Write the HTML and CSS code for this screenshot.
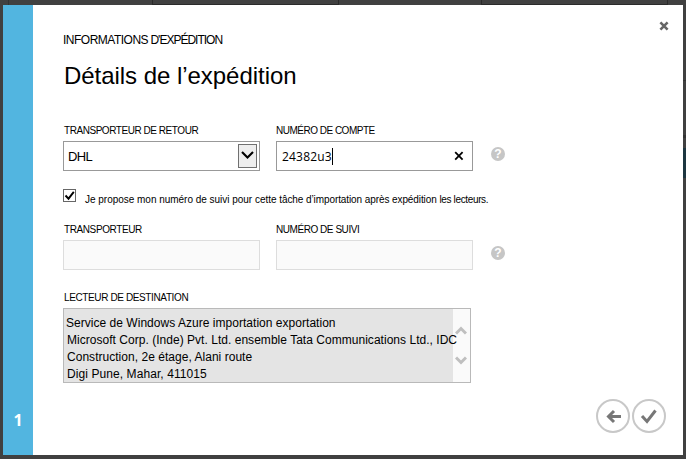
FILE: index.html
```html
<!DOCTYPE html>
<html lang="fr">
<head>
<meta charset="utf-8">
<title>Détails de l’expédition</title>
<link rel="stylesheet" href="styles.css">
</head>
<body>
<div class="backdrop-tab tab-start"></div>
<div class="backdrop-tab tab-left"></div>
<div class="backdrop-tab tab-right"></div>
<div class="backdrop-rule"></div>
<div class="backdrop-selection"></div>
<main class="dialog">
  <aside class="steps"><span>1</span></aside>
  <section class="content">
    <button class="close" aria-label="Fermer"><svg width="10" height="10" viewBox="0 0 10 10"><path d="M1.4 1.4l7.2 7.2M8.6 1.4L1.4 8.6"/></svg></button>
    <p class="eyebrow"><span>INFORMATIONS</span><span class="eyebrow-end"> D'EXPÉDITION</span></p>
    <h1>Détails de l’expédition</h1>
    <div class="row">
      <div class="field">
        <label class="label-carrier">TRANSPORTEUR DE RETOUR</label>
        <div class="box select"><span class="value-carrier">DHL</span><span class="drop"><svg width="17" height="22" viewBox="0 0 17 22"><path d="M3 7l5.5 5.5L14 7"/></svg></span></div>
      </div>
      <div class="field">
        <label class="label-account">NUMÉRO DE COMPTE</label>
        <div class="box input"><span class="value-account">24382u3</span><span class="caret"></span><svg class="clear" width="10" height="10" viewBox="0 0 10 10"><path d="M1.2 1.2l7.4 7.4M8.6 1.2L1.2 8.6"/></svg></div>
      </div>
      <span class="help">?</span>
    </div>
    <div class="check-row">
      <span class="checkbox"><svg width="11" height="11" viewBox="0 0 11 11"><path d="M1.5 5.5l3 3.2L9.8 1.8"/></svg></span>
      <p class="check-text"><span class="check-start">Je propose mon numéro de suivi pour cette </span><span class="check-mid">tâche d’importation après expédition </span><span class="check-end">les lecteurs.</span></p>
    </div>
    <div class="row">
      <div class="field">
        <label class="label-track-carrier">TRANSPORTEUR</label>
        <div class="box disabled"></div>
      </div>
      <div class="field">
        <label class="label-track">NUMÉRO DE SUIVI</label>
        <div class="box disabled"></div>
      </div>
      <span class="help">?</span>
    </div>
    <div class="destination">
      <label class="label-dest">LECTEUR DE DESTINATION</label>
      <div class="address">
        <div class="lines">
          <p class="line1">Service de Windows Azure importation exportation</p>
          <p class="line2">Microsoft Corp. (Inde) Pvt. Ltd. ensemble Tata Communications Ltd., IDC</p>
          <p class="line3">Construction, 2e étage, Alani route</p>
          <p class="line4">Digi Pune, Mahar, 411015</p>
        </div>
        <div class="scroll">
          <svg width="12" height="9" viewBox="0 0 12 9"><path d="M1 7.5l5-5 5 5"/></svg>
          <svg width="12" height="9" viewBox="0 0 12 9"><path d="M1 1.5l5 5 5-5"/></svg>
        </div>
      </div>
    </div>
    <nav class="actions">
      <button aria-label="Précédent"><svg width="34" height="34" viewBox="0 0 34 34"><circle cx="17" cy="17" r="16"/><path d="M25 17.5H13M18 12l-5.5 5.5L18 23"/></svg></button>
      <button aria-label="Terminer"><svg width="34" height="34" viewBox="0 0 34 34"><circle cx="17" cy="17" r="16"/><path d="M10 17l5 5.5 8.5-11"/></svg></button>
    </nav>
  </section>
</main>
</body>
</html>
```
FILE: styles.css
```css
* { box-sizing: border-box; }
body {
  margin: 0;
  height: 459px;
  padding: 5px 3px 4px;
  background: #404040;
  color: #000;
  font-family: "Liberation Sans", Arial, sans-serif;
  overflow: hidden;
}
p, h1 { margin: 0; font-weight: 400; white-space: pre; }
label { white-space: pre; }
button { padding: 0; border: 0; background: none; display: block; }
svg { display: block; fill: none; }
.backdrop-tab { position: absolute; top: 0; height: 5px; border: 1px solid #2a2a2a; border-top: 0; }
.tab-start { left: 8px; width: 145px; border-color: #333; border-bottom: 0; }
.tab-left { left: 152px; width: 187px; }
.tab-right { left: 481px; width: 187px; }
.backdrop-rule { position: absolute; top: 80px; right: 0; width: 3px; height: 58px; border: solid #333; border-width: 1px 0 3px; }
.backdrop-selection { position: absolute; top: 148px; right: 0; width: 3px; height: 30px; background: #1d3640; }
.dialog { position: relative; display: flex; width: 680px; height: 450px; background: #fff; }
.steps {
  width: 30px;
  display: flex;
  align-items: flex-end;
  justify-content: center;
  padding-bottom: 26px;
  background: #52b5e0;
  color: #fff;
  font: bold 16px/18px "Open Sans", sans-serif;
}
.content { position: relative; flex: 1; padding: 27px 0 0 30px; }
.close { position: absolute; top: 16px; right: 14px; }
.close path { stroke: #666; stroke-width: 2.6; }
.eyebrow { height: 16px; font-size: 12px; line-height: 16px; letter-spacing: -.5px; }
.eyebrow-end { letter-spacing: -1px; }
h1 { margin-top: 13px; padding-left: 1px; height: 30px; font-size: 24px; line-height: 30px; letter-spacing: -.04px; }
.row { display: flex; gap: 16px; margin-top: 34px; }
.field { width: 197px; }
.field label, .destination label { display: block; height: 12px; margin-left: 1px; font-size: 10px; line-height: 12px; }
.field + .field label { margin-left: 0; }
.label-carrier { letter-spacing: -.45px; }
.label-account { letter-spacing: -.5px; }
.label-track-carrier { letter-spacing: -.4px; }
.label-track { letter-spacing: -.45px; }
.label-dest { letter-spacing: -.38px; }
.box { height: 30px; margin-top: 4px; border: 1px solid #999; display: flex; align-items: center; font-size: 13px; }
.disabled { border-color: #ddd; background: #fafafa; }
.select { width: 197px; justify-content: space-between; padding: 0 2px 0 4px; }
.value-carrier { letter-spacing: -.6px; }
.drop { width: 19px; height: 24px; border: 1px solid #707070; background: #eee; }
.drop path { stroke: #000; stroke-width: 2.1; }
.input { padding-left: 5px; font-family: "Open Sans", sans-serif; font-size: 12px; }
.value-account { letter-spacing: .2px; }
.caret { width: 1px; height: 17px; background: #000; }
.clear { margin: 0 8px 0 auto; }
.clear path { stroke: #000; stroke-width: 1.8; }
.help {
  width: 14px; height: 14px; margin: 22px 0 0 2px;
  border-radius: 50%;
  background: #c6c6c6;
  color: #fff;
  text-align: center;
  font: bold 12px/14px "Liberation Sans", sans-serif;
}
.check-row { display: flex; margin-top: 18px; height: 16px; }
.checkbox { width: 13px; height: 13px; border: 1px solid #666; }
.checkbox path { stroke: #000; stroke-width: 1.9; }
.check-text { margin: 4px 0 0 9px; font-size: 10px; line-height: 14px; }
.check-start { letter-spacing: -.02px; }
.check-mid { letter-spacing: -.09px; }
.check-end { letter-spacing: -.35px; }
.check-row + .row { margin-top: 19px; }
.destination { margin-top: 22px; width: 408px; }
.address { display: flex; height: 75px; margin-top: 4px; border: 1px solid #b9b9b9; background: #e4e4e4; font-size: 12px; line-height: 17px; }
.lines { width: 389px; padding: 6px 0 0 2px; z-index: 1; letter-spacing: .03px; }
.lines p + p { padding-left: 1px; }
.line4 { letter-spacing: .08px; }
.scroll { width: 17px; padding: 17px 0 0 2px; background: #fafafa; display: flex; flex-direction: column; gap: 21px; }
.scroll path { stroke: #bfbfbf; stroke-width: 3; }
.actions { position: absolute; right: 17px; bottom: 22px; display: flex; gap: 2px; }
.actions circle { stroke: #c8c8c8; stroke-width: 2; }
.actions path { stroke: #777; stroke-width: 3; }
```
